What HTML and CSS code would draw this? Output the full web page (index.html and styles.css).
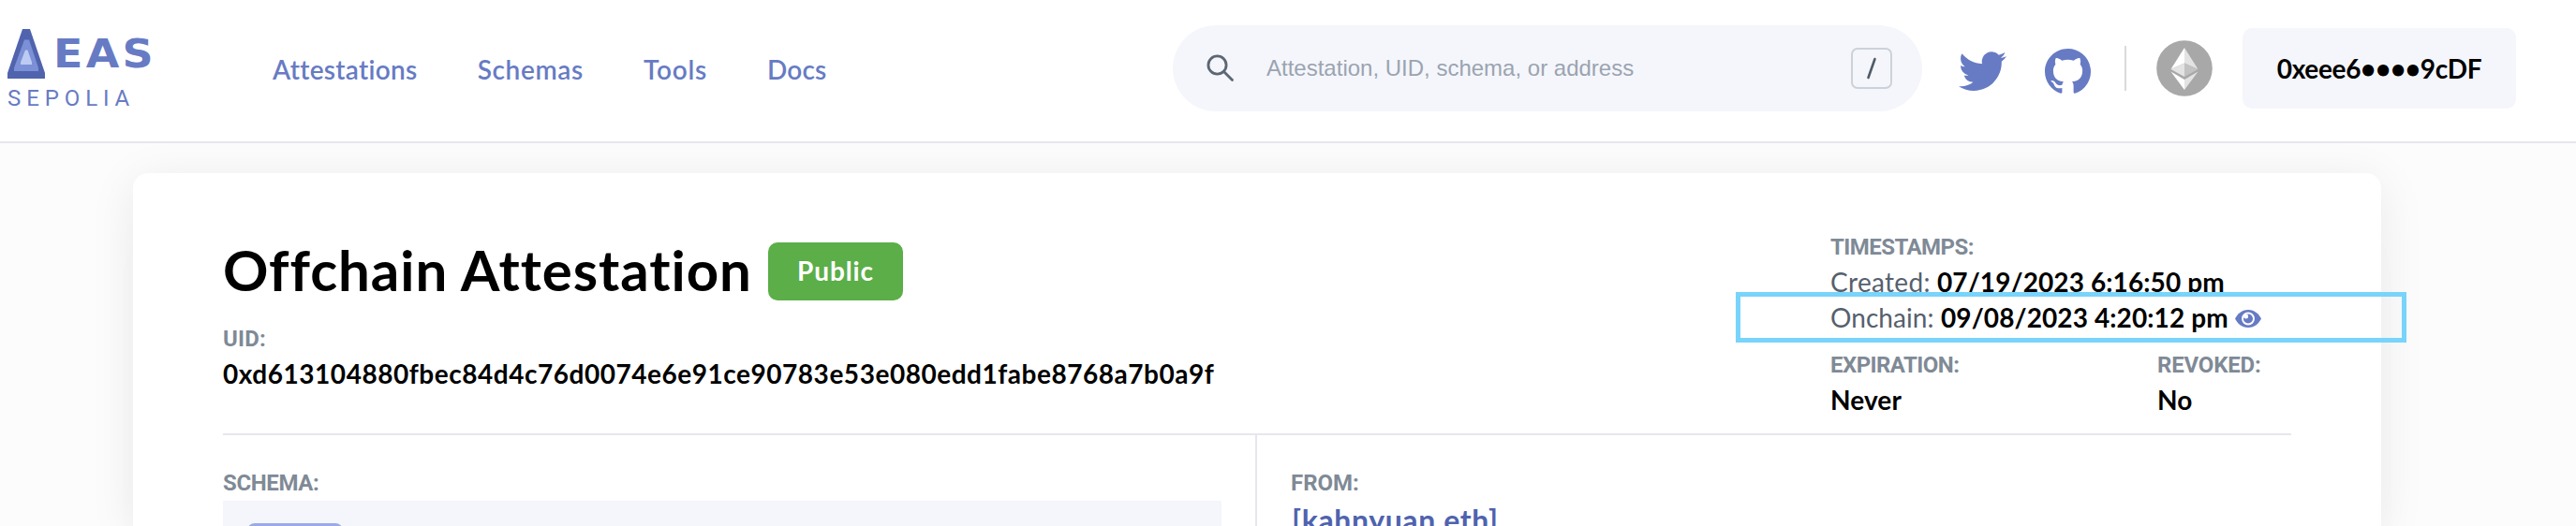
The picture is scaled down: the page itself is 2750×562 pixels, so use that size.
FILE: index.html
```
<!DOCTYPE html>
<html lang="en">
<head>
<meta charset="utf-8">
<title>Offchain Attestation</title>
<link rel="stylesheet" href="styles.css">
</head>
<body>
<header class="header">
  <div class="logo">
    <div class="logo-top">
      <svg class="logo-mark" width="40" height="53" viewBox="0 0 40 53">
        <path fill="#5064ae" d="M16 0h8l16 47v6H0v-6z"/>
        <path fill="#7b90d6" d="M18 11.500h5l10 30v3.500H7v-3.500z"/>
        <path fill="#bccbf2" d="M19 22.500h2.500l4.500 13v2.500H14v-2.500z"/>
      </svg>
      <span class="logo-word">EAS</span>
    </div>
    <span class="logo-net">SEPOLIA</span>
  </div>
  <nav class="nav">
    <a class="nav-att">Attestations</a>
    <a class="nav-sch">Schemas</a>
    <a class="nav-tools">Tools</a>
    <a class="nav-docs">Docs</a>
  </nav>
  <div class="search">
    <svg class="search-icon" width="30" height="30" viewBox="0 0 30 30" fill="none" stroke="#5b6774" stroke-width="2.800" stroke-linecap="round">
      <circle cx="11.500" cy="11.500" r="9.600"/><path d="M18.500 18.500l9 9"/>
    </svg>
    <span class="placeholder">Attestation, UID, schema, or address</span>
    <span class="key"><svg width="12" height="24" viewBox="0 0 12 24"><path d="M9.500 2L2.500 22" stroke="#4f5b68" stroke-width="2.600" stroke-linecap="round"/></svg></span>
  </div>
  <svg class="twitter" width="51" height="42" viewBox="0 2.100 24 19.700" preserveAspectRatio="none"><path fill="#677bc4" d="M23.953 4.570a10 10 0 01-2.825.775 4.958 4.958 0 002.163-2.723c-.951.555-2.005.959-3.127 1.184a4.920 4.920 0 00-8.384 4.482C7.690 8.095 4.067 6.130 1.640 3.162a4.822 4.822 0 00-.666 2.475c0 1.710.870 3.213 2.188 4.096a4.904 4.904 0 01-2.228-.616v.060a4.923 4.923 0 003.946 4.827 4.996 4.996 0 01-2.212.085 4.936 4.936 0 004.604 3.417 9.867 9.867 0 01-6.102 2.105c-.390 0-.779-.023-1.170-.067a13.995 13.995 0 007.557 2.209c9.053 0 13.998-7.496 13.998-13.985 0-.210 0-.420-.015-.630A9.935 9.935 0 0024 4.590z"/></svg>
  <svg class="github" width="49" height="48" viewBox="0 0 24 23.500" preserveAspectRatio="none"><path fill="#677bc4" d="M12 0C5.370 0 0 5.370 0 12c0 5.300 3.440 9.800 8.200 11.390.600.110.820-.260.820-.580v-2.230c-3.340.730-4.030-1.420-4.030-1.420-.550-1.390-1.330-1.760-1.330-1.760-1.090-.740.080-.730.080-.730 1.200.090 1.840 1.240 1.840 1.240 1.070 1.830 2.810 1.300 3.490 1 .110-.780.420-1.310.760-1.610-2.660-.300-5.470-1.330-5.470-5.930 0-1.310.470-2.380 1.240-3.220-.140-.300-.540-1.520.100-3.180 0 0 1.010-.320 3.300 1.230a11.500 11.500 0 016.010 0c2.290-1.550 3.300-1.230 3.300-1.230.640 1.660.240 2.880.120 3.180.770.840 1.230 1.910 1.230 3.220 0 4.610-2.810 5.620-5.480 5.920.420.360.810 1.100.810 2.220v3.290c0 .320.190.690.800.580A12 12 0 0012 0z"/></svg>
  <span class="bar"></span>
  <svg class="eth" width="60" height="60" viewBox="0 0 60 60">
    <circle cx="30" cy="30" r="29.800" fill="#a8a8a8"/>
    <path fill="#fff" d="M30 8L15.500 31 30 24.500z"/>
    <path fill="#e3e3e3" d="M30 8l14.500 23L30 24.500z"/>
    <path fill="#e3e3e3" d="M30 24.500L15.500 31 30 39z"/>
    <path fill="#c2c2c2" d="M30 24.500L44.500 31 30 39z"/>
    <path fill="#fff" d="M15.500 33.500L30 42v11z"/>
    <path fill="#e3e3e3" d="M44.500 33.500L30 42v11z"/>
  </svg>
  <div class="account">0xeee6••••9cDF</div>
</header>

<main class="page">
  <section class="card">
    <div class="summary">
      <div class="identity">
        <div class="title-row">
          <h1 class="title">Offchain Attestation</h1>
          <span class="badge">Public</span>
        </div>
        <div class="label label-uid">UID:</div>
        <div class="uid">0xd613104880fbec84d4c76d0074e6e91ce90783e53e080edd1fabe8768a7b0a9f</div>
      </div>
      <div class="facts">
        <div class="label label-tight">TIMESTAMPS:</div>
        <div class="stamp"><span class="stamp-name">Created:</span><span class="value">07/19/2023 6:16:50 pm</span></div>
        <div class="stamp stamp-onchain"><span class="stamp-name">Onchain:</span><span class="value">09/08/2023 4:20:12 pm</span>
          <svg class="eye" width="28" height="19" viewBox="0 0 28 19"><path fill="#677bc4" d="M14 0C21 0 25.500 4.500 28 9.500 25.500 14.500 21 19 14 19S2.500 14.500 0 9.500C2.500 4.500 7 0 14 0z"/><circle cx="14" cy="9.500" r="6" fill="#677bc4" stroke="#fff" stroke-width="1.900"/><circle cx="11.600" cy="7" r="2.500" fill="#fff"/></svg>
          <span class="highlight"></span>
        </div>
        <div class="pair">
          <div class="expiration"><div class="label label-tight">EXPIRATION:</div><div class="value">Never</div></div>
          <div><div class="label label-revoked">REVOKED:</div><div class="value">No</div></div>
        </div>
      </div>
    </div>
    <div class="details">
      <div class="schema">
        <div class="label label-schema">SCHEMA:</div>
        <div class="schema-box"><span class="chip"></span></div>
      </div>
      <div class="from">
        <div class="label">FROM:</div>
        <a class="ens">[kahnyuan.eth]</a>
      </div>
    </div>
  </section>
</main>
</body>
</html>
```
FILE: styles.css
```
* { box-sizing: border-box; }

body {
  margin: 0;
  height: 562px;
  overflow: hidden;
  background: #fcfcfc;
  color: #000;
  font: 28px/38px Lato, "Noto Sans", sans-serif;
}

svg { display: block; flex: none; }

/* Header */
.header {
  position: relative;
  z-index: 1;
  display: flex;
  align-items: center;
  height: 153px;
  padding: 0 0 5px 8px;
  border-bottom: 2px solid #e6e6ed;
  background: #fff;
  white-space: nowrap;
}

.logo { align-self: flex-start; width: 283px; padding-top: 31px; color: #677bc4; }
.logo-top { display: flex; height: 60px; }
.logo-word {
  margin-left: 9px;
  font: bold 42px/53px "DejaVu Sans", sans-serif;
  letter-spacing: 3px;
  transform: scaleX(1.095);
  transform-origin: 0 0;
}
.logo-net { display: block; font: 24px/28px Roboto, sans-serif; letter-spacing: 5.9px; }

.nav { display: flex; gap: 64px; width: 961px; padding-top: 2px; color: #677bc4; font-weight: 600; }
.nav-att { letter-spacing: .3px; }
.nav-sch { letter-spacing: .65px; }
.nav-tools { letter-spacing: .75px; }
.nav-docs { letter-spacing: .19px; }

.search {
  display: flex;
  align-items: center;
  flex: none;
  width: 800px;
  height: 92px;
  padding: 0 32px 0 36px;
  border-radius: 46px;
  background: #f5f6fb;
}
.placeholder {
  margin-left: 34px;
  color: #9aa4b1;
  font: 24px/30px "Liberation Sans", Arial, sans-serif;
}
.key {
  display: flex;
  align-items: center;
  justify-content: center;
  width: 44px;
  height: 44px;
  margin-left: auto;
  border: 2px solid #ccd2d9;
  border-radius: 7px;
}
.twitter { margin: 5px 0 0 39px; }
.github { margin: 5px 0 0 41px; }
.bar { width: 2px; height: 48px; margin-left: 36px; background: #dadada; }
.eth { margin-left: 32px; }
.account {
  width: 292px;
  height: 86px;
  margin-left: 32px;
  border-radius: 10px;
  background: #f5f6fb;
  font-weight: bold;
  line-height: 86px;
  letter-spacing: -.33px;
  text-align: center;
}

/* Attestation card */
.page { padding: 32px 0 0 142px; }
.card {
  width: 2400px;
  height: 377px;
  padding: 60px 96px 0;
  border-radius: 16px 16px 0 0;
  background: #fff;
  box-shadow: 0 8px 50px rgba(0, 0, 0, .08), 0 60px 50px rgba(0, 0, 0, .01);
}
.summary {
  display: flex;
  justify-content: space-between;
  height: 220px;
  border-bottom: 2px solid #e6e6ed;
}
.identity { padding-top: 7px; }
.title-row { display: flex; align-items: flex-start; }
.title {
  width: 564px;
  margin: 0 18px 0 0;
  font-size: 60px;
  line-height: 72px;
  letter-spacing: .94px;
  white-space: nowrap;
}
.badge {
  width: 144px;
  height: 62px;
  margin-top: 7px;
  border-radius: 10px;
  background: #5bae48;
  color: #fff;
  font-weight: bold;
  line-height: 60px;
  letter-spacing: .89px;
  text-align: center;
}
.label {
  color: #7f8a96;
  font: bold 24px/36px Roboto, sans-serif;
}
.label-uid { margin-top: 21px; line-height: 35px; letter-spacing: .19px; }
.label-tight { letter-spacing: -.55px; }
.label-revoked { letter-spacing: -.19px; }
.label-schema { letter-spacing: -.38px; }
.uid { font-weight: bold; letter-spacing: .53px; }
.value { font-weight: bold; letter-spacing: .1px; }

.facts { width: 492px; padding-top: 1px; }
.stamp { position: relative; display: flex; white-space: nowrap; }
.stamp-name { width: 114px; color: #55606e; letter-spacing: .33px; }
.stamp-onchain .stamp-name { width: 118px; letter-spacing: .07px; }
.eye { margin: 11px 0 0 7px; }
.highlight {
  position: absolute;
  top: -8px;
  left: -101px;
  width: 716px;
  height: 54px;
  border: 5px solid #78d4fb;
}
.pair { display: flex; margin-top: 14px; }
.expiration { width: 349px; }

.details { display: flex; height: 97px; overflow: hidden; }
.schema {
  width: 1104px;
  padding: 33px 36px 0 0;
  border-right: 2px solid #e6e6ed;
}
.schema-box { height: 27px; margin-top: 1px; padding: 24px 26px 0; background: #f5f6fb; overflow: hidden; }
.chip { display: block; width: 102px; height: 40px; border-radius: 8px; background: #9aaae8; }
.from { padding: 33px 0 0 36px; }
.ens {
  display: block;
  margin: 2px 0 0 1px;
  color: #4f63ae;
  font-size: 32px;
  font-weight: bold;
  line-height: 40px;
  letter-spacing: .63px;
}
```
